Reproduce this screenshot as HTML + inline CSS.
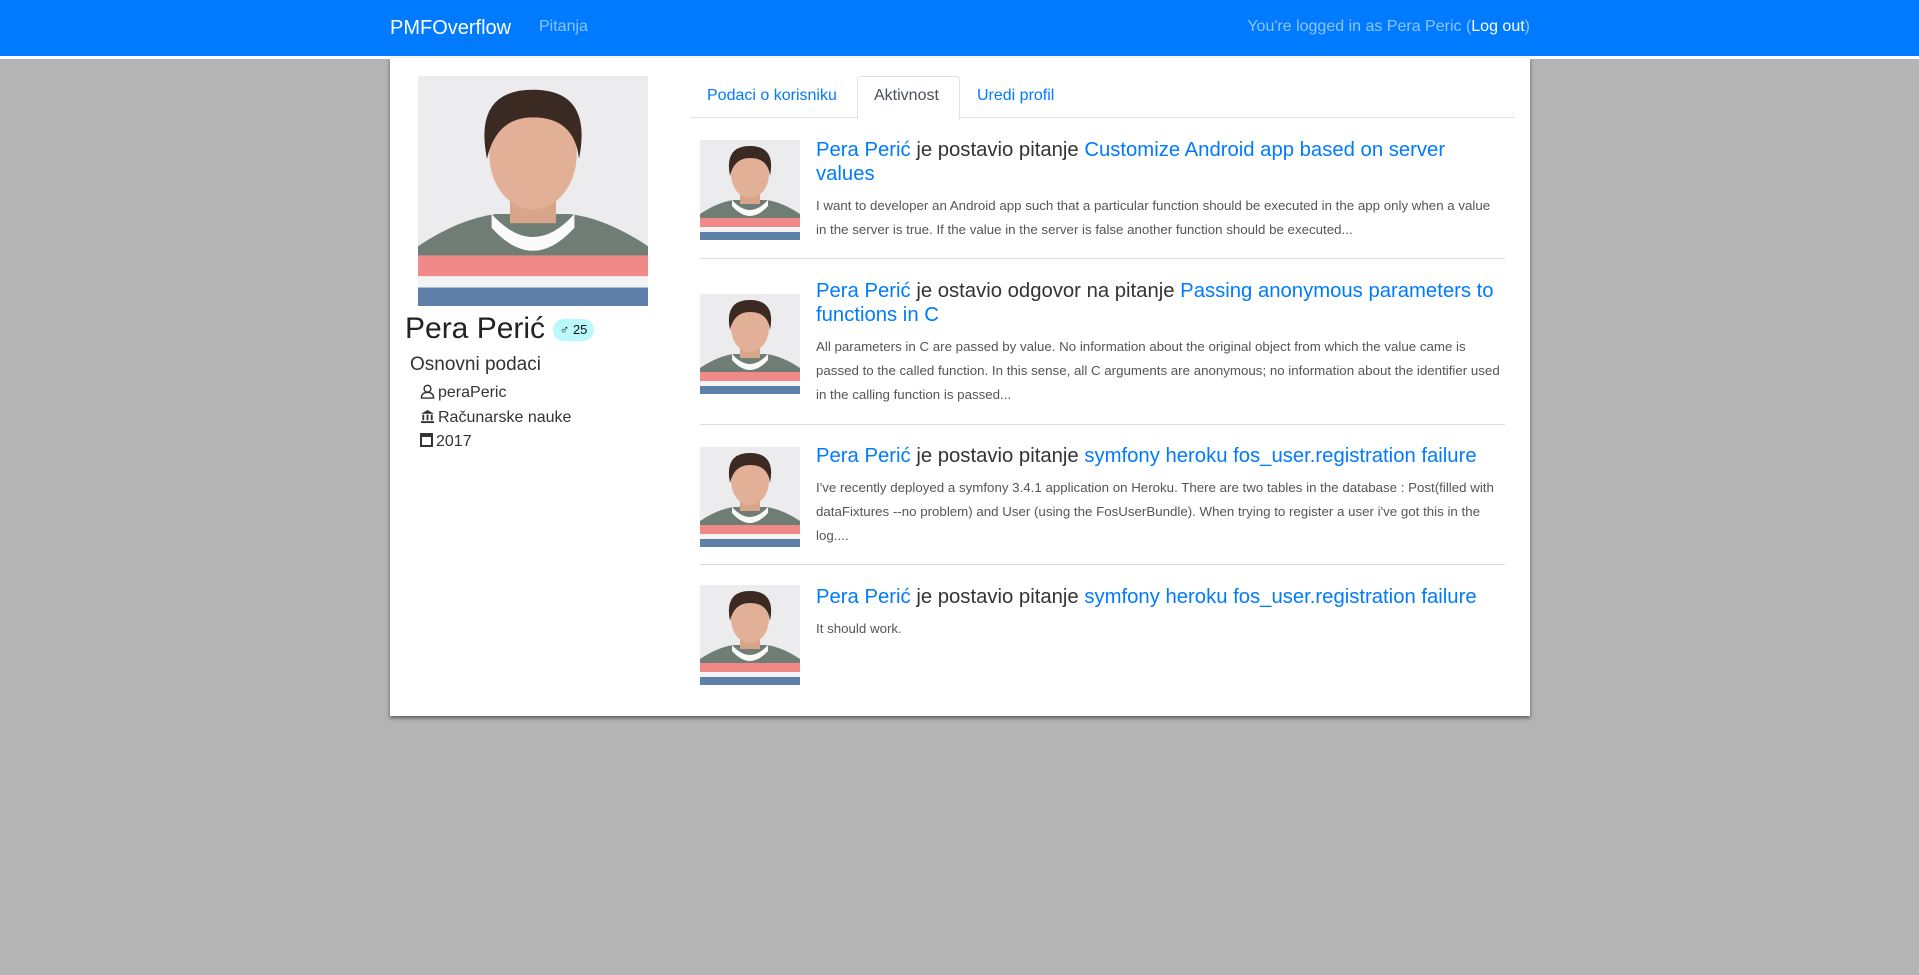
<!DOCTYPE html>
<html><head><meta charset="utf-8"><style>
*{box-sizing:border-box;margin:0;padding:0}
body{width:1919px;height:975px;overflow:hidden;background:#fff;font-family:"Liberation Sans",sans-serif;position:relative}
.nav{position:absolute;left:0;top:0;width:1919px;height:56px;background:#007bff}
.bg{position:absolute;left:0;top:59px;width:1919px;height:916px;background:#b4b4b4}
.card{position:absolute;left:390px;top:58px;width:1140px;height:658px;background:#fff;box-shadow:0 2px 4px rgba(0,0,0,.5)}
.a{position:absolute;white-space:nowrap}
.blue{color:#007bff}
.t{font-size:20.3px;line-height:24px;color:#333}
.d{font-size:13.3px;line-height:24px;color:#555}
.hr{position:absolute;left:700px;width:805px;height:1px;background:#ddd}
</style></head><body>
<svg width="0" height="0" style="position:absolute"><defs><symbol id="p" viewBox="0 0 100 100">
<rect width="100" height="100" fill="#ecebee"/>
<path d="M0 74 Q18 62 34 60 L66 60 Q82 62 100 74 L100 100 L0 100Z" fill="#6f7d74"/>
<rect x="0" y="78" width="100" height="9" fill="#f08a88"/>
<rect x="0" y="87" width="100" height="5" fill="#f4f4f4"/>
<rect x="0" y="92" width="100" height="8" fill="#5e7fa8"/>
<path d="M32 60 Q50 80 68 60 L68 66 Q50 86 32 66Z" fill="#fafafa"/>
<rect x="40" y="48" width="20" height="16" fill="#d8a58a"/>
<ellipse cx="50" cy="34" rx="19" ry="24" fill="#e2b096"/>
<path d="M30 36 Q24 6 50 6 Q76 6 70 36 Q68 18 50 18 Q34 18 30 36Z" fill="#3a2a22"/>
</symbol></defs></svg>
<div class="nav"></div>
<div class="a" style="left:390px;top:17px;font-size:20px;color:#fff">PMFOverflow</div>
<div class="a" style="left:539px;top:18px;font-size:16px;color:rgba(255,255,255,.55)">Pitanja</div>
<div class="a" style="right:389px;top:18px;font-size:16px;color:rgba(255,255,255,.55)">You're logged in as Pera Peric (<span style="color:#fff">Log out</span>)</div>
<div class="bg"></div>
<div class="card"></div>
<svg class="a" style="left:418px;top:76px" width="230" height="230"><use href="#p"/></svg>
<div class="a" style="left:405px;top:312px;font-size:30px;color:#222">Pera Perić</div>
<div class="a" style="left:553px;top:319px;width:41px;height:22px;border-radius:11px;background:#b9f8fb;font-size:13px;line-height:22px;text-align:center;color:#111">♂ 25</div>
<div class="a" style="left:410px;top:354px;font-size:19px;color:#333">Osnovni podaci</div>
<div class="a" style="left:420px;top:381px;font-size:16px;color:#333;line-height:24.5px">
<div><svg width="15" height="15" viewBox="0 0 16 16" style="vertical-align:-2px;margin-right:3px"><circle cx="8" cy="5" r="3.6" fill="none" stroke="#333" stroke-width="1.5"/><path d="M1.5 15 Q1.5 9 8 9 Q14.5 9 14.5 15Z" fill="none" stroke="#333" stroke-width="1.5"/></svg>peraPeric</div>
<div><svg width="15" height="15" viewBox="0 0 16 16" style="vertical-align:-2px;margin-right:3px"><path d="M1 5 L8 1 L15 5Z" fill="#333"/><rect x="1" y="13" width="14" height="2" fill="#333"/><rect x="2.5" y="6" width="2" height="6" fill="#333"/><rect x="7" y="6" width="2" height="6" fill="#333"/><rect x="11.5" y="6" width="2" height="6" fill="#333"/></svg>Računarske nauke</div>
<div><span style="display:inline-block;width:13px;height:14px;border:2px solid #333;border-top-width:4px;margin-right:3px;vertical-align:-1px"></span>2017</div>
</div>
<div class="a" style="left:690px;top:117px;width:825px;height:1px;background:#dee2e6"></div>
<div class="a" style="left:857px;top:76px;width:103px;height:43px;background:#fff;border:1px solid #dee2e6;border-bottom:none;border-radius:4px 4px 0 0"></div>
<div class="a blue" style="left:707px;top:87px;font-size:16px">Podaci o korisniku</div>
<div class="a" style="left:874px;top:87px;font-size:16px;color:#495057">Aktivnost</div>
<div class="a blue" style="left:977px;top:87px;font-size:16px">Uredi profil</div>
<svg class="a" style="left:700px;top:140px" width="100" height="100"><use href="#p"/></svg>
<div class="a t" style="left:816px;top:138px"><span class="blue">Pera Perić</span> je postavio pitanje <span class="blue">Customize Android app based on server</span><br><span class="blue">values</span></div>
<div class="a d" style="left:816px;top:194px">I want to developer an Android app such that a particular function should be executed in the app only when a value<br>in the server is true. If the value in the server is false another function should be executed...</div>
<div class="hr" style="top:258px"></div>
<svg class="a" style="left:700px;top:294px" width="100" height="100"><use href="#p"/></svg>
<div class="a t" style="left:816px;top:279px"><span class="blue">Pera Perić</span> je ostavio odgovor na pitanje <span class="blue">Passing anonymous parameters to</span><br><span class="blue">functions in C</span></div>
<div class="a d" style="left:816px;top:335px">All parameters in C are passed by value. No information about the original object from which the value came is<br>passed to the called function. In this sense, all C arguments are anonymous; no information about the identifier used<br>in the calling function is passed...</div>
<div class="hr" style="top:424px"></div>
<svg class="a" style="left:700px;top:447px" width="100" height="100"><use href="#p"/></svg>
<div class="a t" style="left:816px;top:444px"><span class="blue">Pera Perić</span> je postavio pitanje <span class="blue">symfony heroku fos_user.registration failure</span></div>
<div class="a d" style="left:816px;top:476px">I've recently deployed a symfony 3.4.1 application on Heroku. There are two tables in the database : Post(filled with<br>dataFixtures --no problem) and User (using the FosUserBundle). When trying to register a user i've got this in the<br>log....</div>
<div class="hr" style="top:564px"></div>
<svg class="a" style="left:700px;top:585px" width="100" height="100"><use href="#p"/></svg>
<div class="a t" style="left:816px;top:585px"><span class="blue">Pera Perić</span> je postavio pitanje <span class="blue">symfony heroku fos_user.registration failure</span></div>
<div class="a d" style="left:816px;top:617px">It should work.</div>
</body></html>
